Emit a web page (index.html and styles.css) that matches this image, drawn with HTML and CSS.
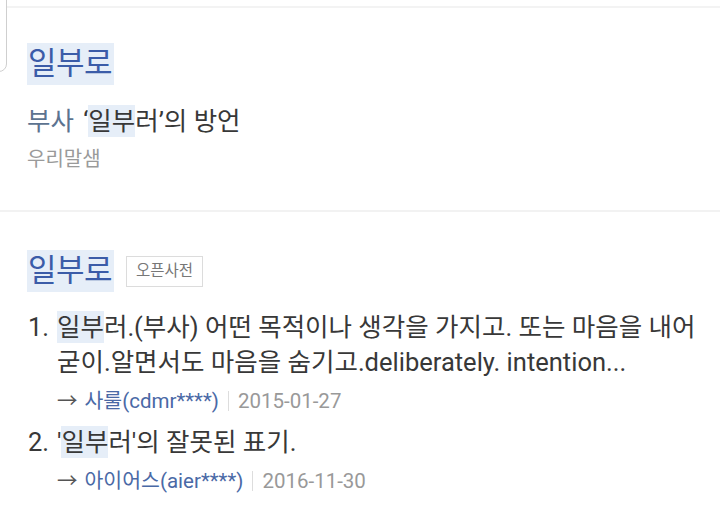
FILE: index.html
```html
<!DOCTYPE html>
<html lang="ko">
<head>
<meta charset="utf-8">
<link rel="stylesheet" href="styles.css">
</head>
<body>
<div class="page">
  <div class="corner-card"></div>
  <div class="topbar"></div>
  <section class="entry entry-first">
    <h2 class="word"><span class="hl">일부로</span></h2>
    <p class="sense"><span class="pos">부사</span> ‘<span class="hl-s">일부</span>러’의 방언</p>
    <p class="source">우리말샘</p>
  </section>
  <div class="divider"></div>
  <section class="entry entry-second">
    <div class="word-row">
      <h2 class="word"><span class="hl">일부로</span></h2>
      <span class="badge">오픈사전</span>
    </div>
    <ol class="defs">
      <li class="def">
        <span class="num">1.</span>
        <div class="def-body">
          <p class="def-text"><span class="hl-s">일부</span>러.(부사) 어떤 목적이나 생각을 가지고. 또는 마음을 내어 굳이.알면서도 마음을 숨기고.deliberately. intention...</p>
          <p class="meta"><span class="arrow">→</span> <span class="user">사룰(cdmr****)</span><span class="sep"></span><span class="date">2015-01-27</span></p>
        </div>
      </li>
      <li class="def">
        <span class="num">2.</span>
        <div class="def-body">
          <p class="def-text">'<span class="hl-s">일부</span>러'의 잘못된 표기.</p>
          <p class="meta"><span class="arrow">→</span> <span class="user">아이어스(aier****)</span><span class="sep"></span><span class="date">2016-11-30</span></p>
        </div>
      </li>
    </ol>
  </section>
</div>
</body>
</html>
```

FILE: styles.css
```css
html, body {
  margin: 0;
  padding: 0;
  background: #ffffff;
}
body {
  font-family: Roboto, "Noto Sans CJK KR", sans-serif;
  color: #383838;
  width: 720px;
  height: 522px;
  overflow: hidden;
}
.page {
  position: relative;
  padding-top: 6px;
}
.corner-card {
  position: absolute;
  left: -30px;
  top: -20px;
  width: 35px;
  height: 90px;
  border: 1px solid #cfcfcf;
  border-radius: 8px;
}
.topbar {
  height: 2px;
  background: #f3f3f3;
  margin-left: 6px;
}
.entry {
  padding-left: 27px;
  padding-right: 12px;
}
.entry-first {
  padding-top: 35px;
  padding-bottom: 38px;
}
.word {
  margin: 0;
  font-weight: normal;
  font-size: 31px;
  line-height: 42px;
  color: #3b5ca8;
}
.hl {
  display: inline-block;
  background: #e6eef8;
  padding: 0 2px 0 1px;
  height: 42px;
  letter-spacing: -0.5px;
}
.hl-s {
  background: #e6eef8;
  padding: 1px 0;
}
.sense {
  margin: 21px 0 0 0;
  font-size: 25.5px;
  line-height: 30px;
}
.pos {
  color: #5c7390;
  margin-right: 3px;
}
.source {
  margin: 10px 0 0 0;
  font-size: 20px;
  line-height: 26px;
  color: #9a9a9a;
}
.divider {
  height: 2px;
  background: #f2f2f2;
}
.entry-second {
  padding-top: 38px;
}
.word-row {
  display: flex;
  align-items: center;
  gap: 12px;
}
.badge {
  border: 1px solid #dcdcdc;
  font-size: 15.5px;
  line-height: 29px;
  padding: 0 9px;
  color: #777;
}
.defs {
  list-style: none;
  margin: 18px 0 0 0;
  padding: 0;
}
.def {
  display: flex;
  font-size: 25.5px;
}
.num {
  width: 29px;
  flex: none;
  line-height: 35px;
  padding-left: 1px;
}
.def-body {
  flex: 1;
}
.def-text {
  margin: 0;
  line-height: 35px;
  word-break: keep-all;
}
.meta {
  margin: 5px 0 8px 0;
  font-size: 20.5px;
  line-height: 32px;
  display: flex;
  align-items: center;
}
.arrow {
  color: #555;
  margin-right: 7px;
}
.user {
  color: #4a69a6;
}
.sep {
  width: 1px;
  height: 20px;
  background: #dddddd;
  margin: 0 9px;
}
.date {
  color: #999;
}
```
